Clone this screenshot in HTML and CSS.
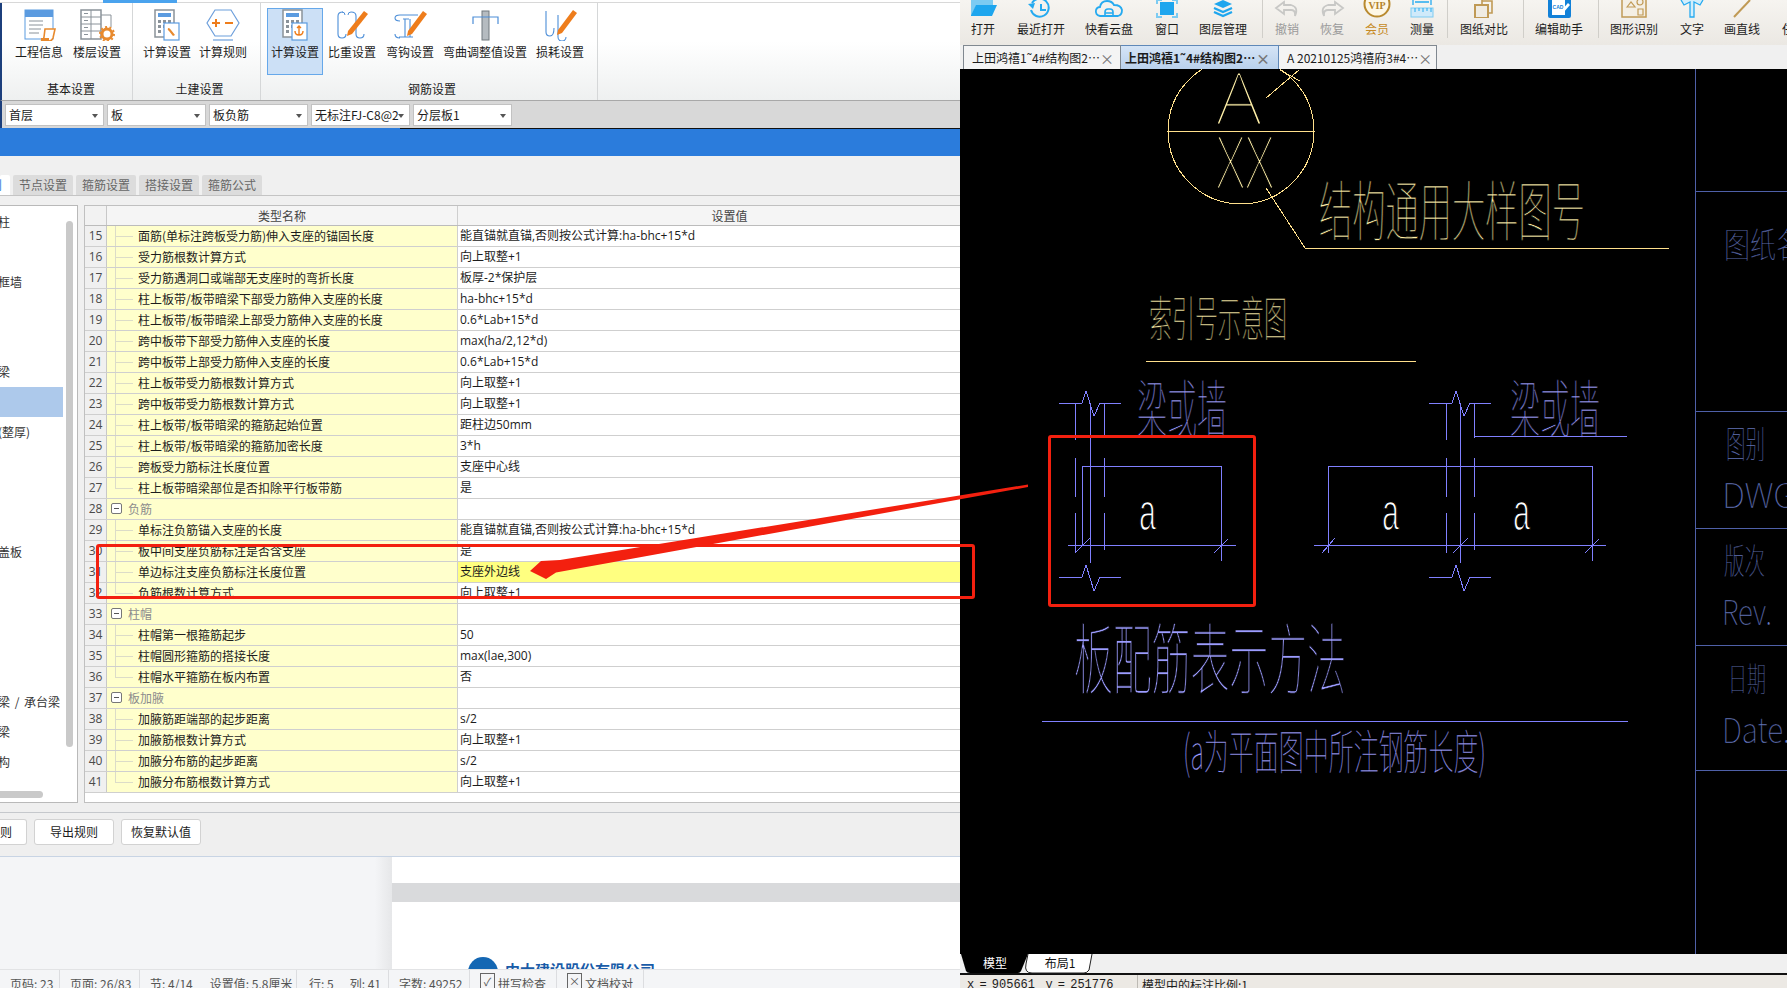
FILE: index.html
```html
<!DOCTYPE html>
<html lang="zh-CN">
<head>
<meta charset="utf-8">
<title>钢筋设置 / CAD 看图</title>
<link rel="stylesheet" href="styles.css">
</head>
<body>
<main class="left">
  <div class="strip"><span class="strip-tab"></span></div>
  <section class="ribbon">
    <div class="rgroup g1">
      <div class="rbtns">
        <div class="rbtn w58">
          <svg class="ricon" viewBox="0 0 36 32"><rect x="4" y="1" width="28" height="29" fill="#fff" stroke="#5b9be0"/><rect x="4" y="1" width="28" height="7" fill="#5b9be0"/><path d="M8 12h14M8 16h14M8 20h12M8 24h10" stroke="#8a9299"/><path d="M24 20h10l-2 9q-1 3-4 3h-8q3-1 3-4z" fill="#fff" stroke="#e88a2e" stroke-width="1.6"/><path d="M20 29h8v3h-8z" fill="#e88a2e"/></svg>
          <span>工程信息</span>
        </div>
        <div class="rbtn w58">
          <svg class="ricon" viewBox="0 0 36 32"><rect x="2" y="1" width="20" height="29" fill="#fff" stroke="#8a9299" stroke-width="1.5"/><path d="M2 8h20M2 15h20M2 22h20M12 1v29" stroke="#8a9299"/><path d="M5 4.500h4M5 11.500h4M5 18.500h4M5 25.500h4M22 6h10v12" stroke="#8a9299" fill="none"/><circle cx="28" cy="25" r="5" fill="#fff" stroke="#e88a2e" stroke-width="3"/><circle cx="28" cy="25" r="7" fill="none" stroke="#e88a2e" stroke-width="2" stroke-dasharray="2 2.400"/></svg>
          <span>楼层设置</span>
        </div>
      </div>
      <div class="rlabel">基本设置</div>
    </div>
    <div class="rgroup g2">
      <div class="rbtns">
        <div class="rbtn w56">
          <svg class="ricon" viewBox="0 0 36 32"><rect x="6" y="1" width="19" height="27" fill="#fff" stroke="#8a9299" stroke-width="1.5"/><rect x="9" y="4" width="13" height="4" fill="#5b9be0"/><path d="M9 11h3v3H9zM14 11h3v3h-3zM19 11h3v3h-3zM9 16h3v3H9zM9 21h3v3H9zM14 16h3v3h-3z" fill="#8a9299"/><rect x="15" y="14" width="15" height="17" fill="#fff" stroke="#5b9be0" stroke-width="1.2"/><path d="M19 19q2 0 3 2l4 5-2 1-4-5q-2-1-1-3z" fill="#e88a2e"/></svg>
          <span>计算设置</span>
        </div>
        <div class="rbtn w56">
          <svg class="ricon" viewBox="0 0 36 32"><path d="M10 1h16l8 13-8 13H10L2 14z" fill="#fff" stroke="#6d9fdc" stroke-width="1.2"/><path d="M7 14h8M11 10v8M20 14h8" stroke="#ee7d1c" stroke-width="2"/><path d="M8 31h20" stroke="#6d9fdc" stroke-width="1.2"/></svg>
          <span>计算规则</span>
        </div>
      </div>
      <div class="rlabel">土建设置</div>
    </div>
    <div class="rgroup g3">
      <div class="rbtns">
        <div class="rbtn w56 active">
          <svg class="ricon" viewBox="0 0 36 32"><rect x="6" y="1" width="19" height="27" fill="#fff" stroke="#8a9299" stroke-width="1.5"/><rect x="9" y="4" width="13" height="4" fill="#5b9be0"/><path d="M9 11h3v3H9zM14 11h3v3h-3zM19 11h3v3h-3zM9 16h3v3H9zM9 21h3v3H9zM14 16h3v3h-3z" fill="#8a9299"/><rect x="15" y="14" width="15" height="17" fill="#fff" stroke="#5b9be0" stroke-width="1.2"/><path d="M22 17v9M18 22q0 4 4 4t4-4M20 19l2-2 2 2" fill="none" stroke="#ee7d1c" stroke-width="1.4"/></svg>
          <span>计算设置</span>
        </div>
        <div class="rbtn w58">
          <svg class="ricon" viewBox="0 0 36 32"><path d="M8 3q-5 0-5 4v18q0 4 4 4t4-4M16 3q5 0 5 4v18q0 4 4 4t4-4" transform="translate(1 0)" fill="none" stroke="#4c8ed8" stroke-width="1.1"/><path d="M8 3q3 0 3 3M17 3q-3 0-3 3" fill="none" stroke="#4c8ed8"/><path d="M30 2l4 3-16 20-5 2 1-5z" fill="#ee7d1c"/></svg>
          <span>比重设置</span>
        </div>
        <div class="rbtn w58">
          <svg class="ricon" viewBox="0 0 36 32"><path d="M26 6H8Q3 6 3 9t5 3M11 10h6M13 10v18M18 10v18M7 28h14M3 25q0 4 5 4" fill="none" stroke="#4c8ed8" stroke-width="1.1"/><path d="M31 2l4 3-15 20-5 2 1-5z" fill="#ee7d1c"/></svg>
          <span>弯钩设置</span>
        </div>
        <div class="rbtn w92">
          <svg class="ricon" viewBox="0 0 36 32"><rect x="15" y="2" width="7" height="29" fill="#b5bbc0" stroke="#70787e"/><path d="M6 15v-7h25v7" fill="none" stroke="#4c8ed8" stroke-width="1.2"/></svg>
          <span>弯曲调整值设置</span>
        </div>
        <div class="rbtn w58">
          <svg class="ricon" viewBox="0 0 36 32"><path d="M4 2v21q0 4 4 4t4-8M16 6v22q0 4 4 4t4-4" fill="none" stroke="#4c8ed8" stroke-width="1.1"/><path d="M31 1l4 3-15 20-5 2 1-5z" fill="#ee7d1c"/></svg>
          <span>损耗设置</span>
        </div>
      </div>
      <div class="rlabel">钢筋设置</div>
    </div>
  </section>
  <section class="selects">
    <div class="sel">首层</div>
    <div class="sel">板</div>
    <div class="sel">板负筋</div>
    <div class="sel">无标注FJ-C8@2</div>
    <div class="sel">分层板1</div>
  </section>
  <div class="bluebar"></div>
  <nav class="tabs">
    <div class="tab tab-on"><span>则</span></div>
    <div class="tab">节点设置</div>
    <div class="tab">箍筋设置</div>
    <div class="tab">搭接设置</div>
    <div class="tab">箍筋公式</div>
  </nav>
  <section class="panels">
    <aside class="tree">
      <div class="titem">柱</div>
      <div class="titem"></div>
      <div class="titem">框墙</div>
      <div class="titem"></div>
      <div class="titem"></div>
      <div class="titem">梁</div>
      <div class="titem sel-item"></div>
      <div class="titem">(整厚)</div>
      <div class="titem"></div>
      <div class="titem"></div>
      <div class="titem"></div>
      <div class="titem">盖板</div>
      <div class="titem"></div>
      <div class="titem"></div>
      <div class="titem"></div>
      <div class="titem"></div>
      <div class="titem wide">梁 / 承台梁</div>
      <div class="titem">梁</div>
      <div class="titem">构</div>
      <i class="vthumb"></i>
      <i class="hthumb"></i>
    </aside>
    <div class="grid">
      <div class="row head"><div class="no"></div><div class="name">类型名称</div><div class="val">设置值</div></div>
      <div class="row"><div class="no">15</div><div class="name">面筋(单标注跨板受力筋)伸入支座的锚固长度</div><div class="val">能直锚就直锚,否则按公式计算:ha-bhc+15*d</div></div>
      <div class="row"><div class="no">16</div><div class="name">受力筋根数计算方式</div><div class="val">向上取整+1</div></div>
      <div class="row"><div class="no">17</div><div class="name">受力筋遇洞口或端部无支座时的弯折长度</div><div class="val">板厚-2*保护层</div></div>
      <div class="row"><div class="no">18</div><div class="name">柱上板带/板带暗梁下部受力筋伸入支座的长度</div><div class="val">ha-bhc+15*d</div></div>
      <div class="row"><div class="no">19</div><div class="name">柱上板带/板带暗梁上部受力筋伸入支座的长度</div><div class="val">0.6*Lab+15*d</div></div>
      <div class="row"><div class="no">20</div><div class="name">跨中板带下部受力筋伸入支座的长度</div><div class="val">max(ha/2,12*d)</div></div>
      <div class="row"><div class="no">21</div><div class="name">跨中板带上部受力筋伸入支座的长度</div><div class="val">0.6*Lab+15*d</div></div>
      <div class="row"><div class="no">22</div><div class="name">柱上板带受力筋根数计算方式</div><div class="val">向上取整+1</div></div>
      <div class="row"><div class="no">23</div><div class="name">跨中板带受力筋根数计算方式</div><div class="val">向上取整+1</div></div>
      <div class="row"><div class="no">24</div><div class="name">柱上板带/板带暗梁的箍筋起始位置</div><div class="val">距柱边50mm</div></div>
      <div class="row"><div class="no">25</div><div class="name">柱上板带/板带暗梁的箍筋加密长度</div><div class="val">3*h</div></div>
      <div class="row"><div class="no">26</div><div class="name">跨板受力筋标注长度位置</div><div class="val">支座中心线</div></div>
      <div class="row"><div class="no">27</div><div class="name last">柱上板带暗梁部位是否扣除平行板带筋</div><div class="val">是</div></div>
      <div class="row"><div class="no">28</div><div class="name group"><b class="minus"></b>负筋</div><div class="val"></div></div>
      <div class="row"><div class="no">29</div><div class="name">单标注负筋锚入支座的长度</div><div class="val">能直锚就直锚,否则按公式计算:ha-bhc+15*d</div></div>
      <div class="row"><div class="no">30</div><div class="name">板中间支座负筋标注是否含支座</div><div class="val">是</div></div>
      <div class="row"><div class="no">31</div><div class="name">单边标注支座负筋标注长度位置</div><div class="val hot">支座外边线</div></div>
      <div class="row"><div class="no">32</div><div class="name last">负筋根数计算方式</div><div class="val">向上取整+1</div></div>
      <div class="row"><div class="no">33</div><div class="name group"><b class="minus"></b>柱帽</div><div class="val"></div></div>
      <div class="row"><div class="no">34</div><div class="name">柱帽第一根箍筋起步</div><div class="val">50</div></div>
      <div class="row"><div class="no">35</div><div class="name">柱帽圆形箍筋的搭接长度</div><div class="val">max(lae,300)</div></div>
      <div class="row"><div class="no">36</div><div class="name last">柱帽水平箍筋在板内布置</div><div class="val">否</div></div>
      <div class="row"><div class="no">37</div><div class="name group"><b class="minus"></b>板加腋</div><div class="val"></div></div>
      <div class="row"><div class="no">38</div><div class="name">加腋筋距端部的起步距离</div><div class="val">s/2</div></div>
      <div class="row"><div class="no">39</div><div class="name">加腋筋根数计算方式</div><div class="val">向上取整+1</div></div>
      <div class="row"><div class="no">40</div><div class="name">加腋分布筋的起步距离</div><div class="val">s/2</div></div>
      <div class="row"><div class="no">41</div><div class="name last">加腋分布筋根数计算方式</div><div class="val">向上取整+1</div></div>
    </div>
  </section>
  <section class="actions">
    <div class="btn btn-cut">则</div>
    <div class="btn">导出规则</div>
    <div class="btn">恢复默认值</div>
  </section>
  <section class="doc">
    <div class="doc-side"></div>
    <div class="doc-page">
      <div class="sheet sheet-a"></div>
      <div class="sheet-gap"></div>
      <div class="sheet sheet-b">
        <span class="logo-mark"></span>
        <span class="logo-text">中大建设股份有限公司</span>
      </div>
    </div>
  </section>
  <footer class="wstatus">
    <div class="cell c60">页码: 23</div>
    <div class="cell c80">页面: 26/83</div>
    <div class="cell c157"><span>节: 4/14</span><span>设置值: 5.8厘米</span></div>
    <div class="cell c92"><span>行: 5</span><span>列: 41</span></div>
    <div class="cell c81">字数: 49252</div>
    <div class="cell c87"><b class="chk">✓</b>拼写检查</div>
    <div class="cell c87"><b class="chk">×</b>文档校对</div>
  </footer>
</main>

<aside class="right">
  <header class="cadbar">
    <div class="ci"><svg class="cicon" viewBox="0 0 30 18"><path d="M3 0h22v4H3z" fill="#7ccbf2"/><path d="M3 0h9l2 3h11v3H8L3 15z" fill="#7ccbf2"/><path d="M3 15L8 5h21l-5 11H3z" fill="#1ea6ee"/></svg><span>打开</span></div>
    <div class="ci"><svg class="cicon" viewBox="0 0 30 18"><path d="M6 3a9 9 0 1 1-1 7" fill="none" stroke="#25aaf0" stroke-width="2"/><path d="M2 4l7-1-2 6z" fill="#25aaf0"/><path d="M15 4v6h5" fill="none" stroke="#25aaf0" stroke-width="2"/></svg><span>最近打开</span></div>
    <div class="ci"><svg class="cicon" viewBox="0 0 30 18"><path d="M6 16q-5-1-4-6 1-3 4-3 1-6 7-6 5 0 7 4 7 0 8 5 0 5-4 6z" fill="none" stroke="#25aaf0" stroke-width="1.800"/><path d="M11 16v-4q0-3 3-3h2q3 0 3 3v4zM11 13h8" fill="none" stroke="#25aaf0" stroke-width="1.600"/></svg><span>快看云盘</span></div>
    <div class="ci"><svg class="cicon" viewBox="0 0 30 18"><rect x="8" y="2" width="14" height="13" fill="#1ea6ee"/><path d="M5 4V0h5M20 0h5v4M5 13v4h5M25 13v4h-5" fill="none" stroke="#7ccbf2" stroke-width="2"/></svg><span>窗口</span></div>
    <div class="ci"><svg class="cicon" viewBox="0 0 30 18"><path d="M15 0l9 4-9 4-9-4z" fill="#1ea6ee"/><path d="M6 8l9 4 9-4M6 12l9 4 9-4" fill="none" stroke="#1ea6ee" stroke-width="2.200"/></svg><span>图层管理</span></div>
    <i class="csep"></i>
    <div class="ci off"><svg class="cicon" viewBox="0 0 30 18"><path d="M12 2L4 8l8 6V10h7q4 0 4 4v2q4-9-4-11h-7z" fill="none" stroke="#c8c8c6" stroke-width="1.800"/></svg><span>撤销</span></div>
    <div class="ci off"><svg class="cicon" viewBox="0 0 30 18"><path d="M18 2l8 6-8 6V10h-7q-4 0-4 4v2Q3 7 11 5h7z" fill="none" stroke="#c8c8c6" stroke-width="1.800"/></svg><span>恢复</span></div>
    <div class="ci vip"><svg class="cicon" viewBox="0 0 30 18"><circle cx="15" cy="4" r="12.500" fill="#fdf7e6" stroke="#b98a2f" stroke-width="2"/><text x="15" y="9" class="viptxt">VIP</text></svg><span>会员</span></div>
    <div class="ci"><svg class="cicon" viewBox="0 0 30 18"><path d="M6 0v5M24 0v5M8 2h14" stroke="#25aaf0" stroke-width="1.300" fill="none"/><rect x="4" y="8" width="22" height="9" fill="#cfeafa" stroke="#7ccbf2"/><path d="M8 8v4M12 8v3M16 8v4M20 8v3M24 8v4" stroke="#25aaf0"/></svg><span>测量</span></div>
    <i class="csep"></i>
    <div class="ci"><svg class="cicon" viewBox="0 0 30 18"><path d="M13 0v5M13 1h10v12h-5" fill="none" stroke="#c09a55" stroke-width="1.600"/><rect x="6" y="5" width="13" height="13" fill="#f0ece3" stroke="#c09a55" stroke-width="2"/></svg><span>图纸对比</span></div>
    <i class="csep"></i>
    <div class="ci"><svg class="cicon" viewBox="0 0 30 18"><rect x="4" y="-2" width="23" height="20" rx="2" fill="#1281d8"/><rect x="8" y="0" width="13" height="15" fill="#fff"/><text x="14" y="9" class="cadtxt">CAD</text><path d="M24 3l2 2-7 8-3 1 1-3z" fill="#fff"/></svg><span>编辑助手</span></div>
    <i class="csep"></i>
    <div class="ci"><svg class="cicon" viewBox="0 0 30 18"><rect x="3" y="-3" width="24" height="20" fill="#f4efe4" stroke="#c09a55" stroke-width="1.500"/><path d="M9 5l4-5 4 5z M20 7h5v6h-5z" transform="translate(-1 2)" fill="none" stroke="#c09a55" stroke-width="1.200"/><circle cx="21" cy="2" r="3" fill="none" stroke="#c09a55" stroke-width="1.200"/></svg><span>图形识别</span></div>
    <div class="ci"><svg class="cicon" viewBox="0 0 30 18"><path d="M4 0l3 5 6-3v15h4V2l6 3 3-5" fill="#d3eefb" stroke="#25aaf0" stroke-width="1.300"/></svg><span>文字</span></div>
    <div class="ci"><svg class="cicon" viewBox="0 0 30 18"><path d="M7 17L23 0" stroke="#c09a55" stroke-width="2"/></svg><span>画直线</span></div>
    <div class="ci"><span class="cicon"></span><span>任务</span></div>
  </header>
  <nav class="ctabs">
    <div class="ctab"><span>上田鸿禧1˜4#结构图2…</span><em>×</em></div>
    <div class="ctab ctab-on"><span>上田鸿禧1˜4#结构图2…</span><em>×</em></div>
    <div class="ctab"><span>A 20210125鸿禧府3#4…</span><em>×</em></div>
  </nav>
  <svg class="cad" viewBox="960 69 827 885" width="827" height="885">
    <g class="t-y">
      <text class="latin" x="1216" y="124" font-size="70" textLength="46" lengthAdjust="spacingAndGlyphs">A</text>
      <text class="latin" x="1216" y="188" font-size="70" textLength="58" lengthAdjust="spacingAndGlyphs">XX</text>
      <text class="big" x="1319" y="235" font-size="65" textLength="266" lengthAdjust="spacingAndGlyphs">结构通用大样图号</text>
      <text class="mid" x="1149" y="336" font-size="48" textLength="138" lengthAdjust="spacingAndGlyphs">索引号示意图</text>
    </g>
    <g class="l-y">
      <circle cx="1241" cy="131" r="73"/>
      <path d="M1167 131H1315M1266 98L1299 70M1280 70L1300 81M1266 188L1305 248H1669M1146 361H1416"/>
    </g>
    <g class="t-b">
      <text class="big" x="1137" y="432" font-size="63" textLength="90" lengthAdjust="spacingAndGlyphs">梁或墙</text>
      <text class="big" x="1510" y="432" font-size="63" textLength="90" lengthAdjust="spacingAndGlyphs">梁或墙</text>
      <text class="big" x="1074" y="688" font-size="77" textLength="272" lengthAdjust="spacingAndGlyphs">板配筋表示方法</text>
      <text class="small" x="1183" y="769" font-size="47" textLength="303" lengthAdjust="spacingAndGlyphs">(a为平面图中所注钢筋长度)</text>
    </g>
    <g class="l-b">
      <path d="M1059 403H1082L1086 391L1094 416L1100 403H1121M1059 577H1082L1086 565L1094 591L1100 577H1121"/>
      <path d="M1075 403V440M1075 458V497M1075 513V553M1090 403V563M1104 403V438M1104 458V497M1104 513V550"/>
      <path d="M1082 545V466H1221V561M1068 545H1236M1075 553L1090 538M1214 553L1228 539"/>
      <path d="M1429 403H1452L1456 391L1464 416L1470 403H1491M1429 577H1452L1456 565L1464 591L1470 577H1491"/>
      <path d="M1446 403V440M1446 458V497M1446 513V553M1460 403V563M1474 403V438M1474 458V497M1474 513V550M1474 436H1627"/>
      <path d="M1328 553V466H1592V561M1314 545H1606M1322 553L1335 538M1453 553L1468 538M1585 553L1599 539"/>
      <path d="M1042 721H1628"/>
    </g>
    <g class="t-w">
      <text x="1139" y="530" font-size="54" textLength="17" lengthAdjust="spacingAndGlyphs">a</text>
      <text x="1382" y="530" font-size="54" textLength="17" lengthAdjust="spacingAndGlyphs">a</text>
      <text x="1513" y="530" font-size="54" textLength="17" lengthAdjust="spacingAndGlyphs">a</text>
    </g>
    <g class="t-d">
      <text x="1724" y="258" font-size="35" textLength="78" lengthAdjust="spacingAndGlyphs">图纸名</text>
      <text x="1726" y="458" font-size="37" textLength="39" lengthAdjust="spacingAndGlyphs">图别</text>
      <text x="1722" y="508" font-size="35" textLength="82" lengthAdjust="spacingAndGlyphs">DWG.</text>
      <text x="1724" y="574" font-size="35" textLength="41" lengthAdjust="spacingAndGlyphs">版次</text>
      <text x="1722" y="625" font-size="35" textLength="50" lengthAdjust="spacingAndGlyphs">Rev.</text>
      <text x="1728" y="691" font-size="33" textLength="38" lengthAdjust="spacingAndGlyphs">日期</text>
      <text x="1722" y="743" font-size="35" textLength="68" lengthAdjust="spacingAndGlyphs">Date.</text>
    </g>
    <path class="l-d" d="M1695 69V954M1695 191H1787M1695 411H1787M1695 528H1787M1695 645H1787M1695 770H1787"/>
  </svg>
  <div class="layouts">
    <svg class="layout-tabs" viewBox="0 0 140 20" width="140" height="20">
      <path class="lt-black" d="M1 0H68L61 17Q60 19 58 19H10Q7 19 6 17z"/>
      <text class="lt-w" x="35" y="14">模型</text>
      <path class="lt-white" d="M68 0L66 10Q64 19 72 19H124Q127 19 129 16L132 0"/>
      <text class="lt-k" x="100" y="14">布局1</text>
    </svg>
  </div>
  <footer class="cstatus">
    <div class="coords">x = 905661  y = 251776</div>
    <div class="scale">模型中的标注比例:1</div>
  </footer>
</aside>

<svg class="marks" viewBox="0 0 1787 988" width="1787" height="988">
  <rect class="mark" x="97.500" y="545.500" width="876" height="52" rx="1.500"/>
  <rect class="mark" x="1049.500" y="436.500" width="205" height="169" rx="1.500"/>
  <polygon class="mark-fill" points="1028,484.500 560,560 541,561 530,571 546,579 556,572.500 1028,487"/>
</svg>
</body>
</html>
```
FILE: styles.css
```css
* { box-sizing: border-box; }
html, body { margin: 0; padding: 0; }
body {
  width: 1787px;
  height: 988px;
  overflow: hidden;
  display: flex;
  position: relative;
  background: #f0f0f0;
  color: #1c1c1c;
  font: 12px/14px "Noto Sans CJK SC", "Open Sans", sans-serif;
}

/* left application */
.left { width: 960px; height: 988px; flex: none; display: flex; flex-direction: column; overflow: hidden; }
.strip { height: 3px; flex: none; background: #fff; border-bottom: 1px solid #d8d8d8; }
.strip-tab { display: block; width: 74px; height: 3px; margin-left: 103px; background: #4aa3ee; }
.ribbon { height: 97px; flex: none; display: flex; background: linear-gradient(#fff 40%, #eef0f0); border-left: 2px solid #1c3f7c; }
.rgroup { height: 97px; padding-top: 5px; border-right: 1px solid #d5d7d8; flex: none; }
.g1 { width: 131px; padding-left: 8px; }
.g2 { width: 128px; padding-left: 6px; }
.g3 { width: 337px; padding-left: 6px; }
.rbtns { display: flex; height: 67px; }
.rbtn { height: 67px; padding-top: 1px; display: flex; flex-direction: column; align-items: center; flex: none; white-space: nowrap; }
.rbtn span { margin-top: 4px; }
.ricon { width: 36px; height: 32px; flex: none; }
.w56 { width: 56px; }
.w58 { width: 58px; }
.w92 { width: 92px; }
.active { background: #cce0f6; border: 1px solid #66a8ea; padding-top: 0; }
.rlabel { margin-top: 7px; text-align: center; }

.selects { height: 28px; flex: none; display: flex; gap: 3px; padding: 3px 0 3px 3px; background: #d8d8d8; border-left: 2px solid #1c3f7c; border-top: 1px solid #a8a8a8; }
.sel { width: 99px; height: 22px; flex: none; background: #fff; border: 1px solid #c2c2c2; padding: 3px 13px 0 3px; white-space: nowrap; overflow: hidden; position: relative; }
.sel::after { content: ""; position: absolute; right: 5px; top: 9px; border: 3px solid transparent; border-top: 4px solid #555; border-bottom: 0; }
.bluebar { height: 28px; flex: none; background: linear-gradient(#111, #111) 400px 0 / 100% 1px no-repeat, #2b7cdc; }

.tabs { height: 40px; flex: none; padding-top: 19px; display: flex; gap: 3px; border-bottom: 1px solid #c4c4c4; background: #f0f0f0; }
.tab { width: 60px; height: 20px; background: #dcdcdc; color: #666; text-align: center; line-height: 20px; border-radius: 2px 2px 0 0; white-space: nowrap; }
.tab-on { width: 10px; background: #fff; color: #2b7cdc; overflow: hidden; text-align: left; }
.tab-on span { margin-left: -10px; }

.panels { height: 598px; flex: none; margin-top: 9px; display: flex; gap: 6px; }
.tree { width: 78px; height: 598px; flex: none; position: relative; background: #fff; border: solid #b9b9b9; border-width: 1px 1px 1px 0; padding-top: 1px; overflow: hidden; }
.titem { height: 30px; line-height: 30px; color: #333; white-space: nowrap; margin-left: -2px; }
.sel-item { width: 65px; background: #adc9eb; }
.wide { word-spacing: 2px; }
.vthumb { position: absolute; left: 66px; top: 15px; width: 7px; height: 526px; background: #c9c9c9; border-radius: 4px; }
.hthumb { position: absolute; left: -10px; top: 585px; width: 53px; height: 7px; background: #c9c9c9; border-radius: 4px; }

.grid { width: 876px; height: 598px; flex: none; background: #fff; border: solid #c0c0c0; border-width: 1px 0 1px 1px; overflow: hidden; }
.row { display: grid; grid-template-columns: 22px 351px 1fr; height: 21px; border-bottom: 1px solid #cfcfcf; line-height: 20px; }
.head { height: 20px; border-bottom-color: #bcbcbc; line-height: 19px; }
.no { background: #f0f0f0; border-right: 1px solid #c8c8c8; text-align: center; color: #4a4a4a; font-family: "Open Sans", sans-serif; }
.name {
  padding-left: 31px;
  white-space: nowrap;
  border-right: 1px solid #cfcfcf;
  background:
    linear-gradient(#dcdcc8, #dcdcc8) 9px 10px / 17px 1px no-repeat,
    linear-gradient(#dcdcc8, #dcdcc8) 8px 0 / 1px 100% no-repeat,
    #ffffcc;
}
.val { padding-left: 2px; white-space: nowrap; font-family: "Open Sans", "Noto Sans CJK SC", sans-serif; }
.head .no { background: #f2f2f2; }
.head .name { background: #f5f5f5; color: #444; padding-left: 0; text-align: center; }
.head .val { background: #f5f5f5; color: #444; padding-left: 41px; text-align: center; font-family: "Noto Sans CJK SC", sans-serif; }
.last {
  background:
    linear-gradient(#dcdcc8, #dcdcc8) 9px 10px / 17px 1px no-repeat,
    linear-gradient(#dcdcc8, #dcdcc8) 8px 0 / 1px 11px no-repeat,
    #ffffcc;
}
.group { padding-left: 21px; color: #8c8c8c; position: relative; background: #ffffcc; }
.minus { position: absolute; left: 4px; top: 4px; width: 11px; height: 11px; border: 1px solid #777; border-radius: 2px; background: linear-gradient(#555, #555) center / 5px 1px no-repeat, #fff; }
.hot { background: #ffff80; }

.actions { height: 53px; flex: none; display: flex; gap: 7px; align-items: flex-start; padding-top: 16px; background: linear-gradient(#c5c8cc, #c5c8cc) 0 9px / 100% 1px no-repeat, #efefef; }
.btn { width: 80px; height: 26px; background: #fff; border: 1px solid #d2d2d2; border-radius: 3px; text-align: center; line-height: 24px; }
.btn-cut { width: 27px; border-left: 0; border-radius: 0 3px 3px 0; text-align: left; }

.doc { height: 113px; flex: none; display: flex; border-top: 1px solid #c8d4e4; background: #f4f5f7; }
.doc-side { width: 392px; flex: none; background: linear-gradient(90deg, #f4f5f7 375px, #e6e7e9 392px); }
.doc-page { flex: 1; overflow: hidden; background: #fff; }
.sheet-a { height: 26px; background: #fff; }
.sheet-gap { height: 19px; background: #d9dadc; }
.sheet-b { height: 68px; padding: 55px 0 0 76px; background: #fff; display: flex; gap: 7px; overflow: hidden; }
.logo-mark { width: 30px; height: 30px; border-radius: 50%; background: #1467b3; flex: none; }
.logo-text { font-size: 15px; line-height: 26px; font-weight: 700; color: #1a5ca8; white-space: nowrap; }

.wstatus { height: 19px; flex: none; display: flex; background: #f4f5f7; border-top: 1px solid #e2e3e5; color: #555; overflow: hidden; position: relative; }
.cell { height: 30px; padding: 7px 0 0 10px; border-right: 1px solid #dcdde0; display: flex; gap: 17px; white-space: nowrap; flex: none; }
.c60 { width: 60px; }
.c80 { width: 80px; }
.c157 { width: 157px; gap: 17px; }
.c92 { width: 92px; gap: 16px; padding-left: 12px; }
.c81 { width: 81px; }
.c87 { width: 87px; gap: 3px; }
.chk { width: 15px; height: 17px; margin-top: -4px; border: 1px solid #666; font-weight: 400; line-height: 14px; text-align: center; flex: none; font-size: 11px; }

/* right application */
.right { width: 827px; height: 988px; flex: none; display: flex; flex-direction: column; overflow: hidden; background: #f0f0f0; }
.cadbar {
  height: 45px; flex: none; margin-left: -6px;
  display: grid;
  grid-template-columns: 58px 58px 78px 38px 74px 4px 46px 44px 46px 44px 6px 68px 10px 62px 16px 56px 60px 40px 64px;
  background: linear-gradient(#f6f4f0, #ebe8e3);
  overflow: hidden;
}
.ci { display: flex; flex-direction: column; align-items: center; white-space: nowrap; overflow: visible; }
.ci > span:last-child { margin-top: 4px; line-height: 14px; }
.cicon { display: block; width: 30px; height: 18px; flex: none; overflow: hidden; }
.off { color: #9a9a9a; }
.vip { color: #c68a25; }
.viptxt { font: 700 10px "Liberation Serif", serif; fill: #b5832a; text-anchor: middle; }
.cadtxt { font: 700 5px "Liberation Sans", sans-serif; fill: #1281d8; text-anchor: middle; }
.csep { width: 1px; height: 38px; background: #d0cec9; justify-self: center; }

.ctabs { height: 24px; flex: none; display: flex; padding-left: 3px; background: #f0f0f0; }
.ctab { width: 158px; height: 24px; border: 1px solid #808890; border-bottom: 0; padding-left: 8px; display: flex; align-items: center; justify-content: space-between; padding-right: 8px; background: #f4f4f4; white-space: nowrap; }
.ctab + .ctab { border-left: 0; }
.ctab em { font-style: normal; font-size: 14px; color: #777; }
.ctab-on { background: linear-gradient(#d5e4f6, #b9d1ec); border: 1px solid #5f88b8; border-bottom: 0; font-weight: 700; padding-left: 4px; }

.cad { display: block; flex: none; background: #000; }
.cad text { font-family: "Noto Sans CJK SC", "Liberation Sans", sans-serif; font-weight: 100; stroke: #000; stroke-width: 0.5px; }
.cad .big { stroke-width: 0.7px; }
.cad .mid { stroke-width: 0.5px; }
.cad .small { stroke-width: 0.3px; }
.cad .latin { stroke-width: 1.2px; }
.t-y text { fill: #fff0a8; }
.t-b text { fill: #9c9cff; }
.t-w text { fill: #fff; font-family: "Liberation Sans", sans-serif; stroke-width: 1.6px; }
.cad .t-d text { fill: #6a7cc8; stroke-width: 0.3px; }
.l-y { fill: none; stroke: #ffe08c; stroke-width: 1; shape-rendering: crispEdges; }
.l-b { fill: none; stroke: #8080ff; stroke-width: 1; shape-rendering: crispEdges; }
.l-d { fill: none; stroke: #4f60a8; stroke-width: 1; shape-rendering: crispEdges; }

.layouts { height: 21px; flex: none; background: #f0f0f0; border-bottom: 2px solid #111; }
.layout-tabs { display: block; }
.lt-black { fill: #000; }
.lt-white { fill: #fff; stroke: #222; }
.lt-w { fill: #fff; font-size: 12px; text-anchor: middle; }
.lt-k { fill: #111; font-size: 12px; text-anchor: middle; }
.cstatus { flex: 1; display: flex; background: #ece9e4; overflow: hidden; }
.coords { width: 178px; padding: 3px 0 0 7px; flex: none; font-family: "Liberation Mono", monospace; font-size: 12px; white-space: pre; border-right: 1px solid #bdbab4; word-spacing: -2px; }
.scale { padding: 3px 0 0 4px; }

/* hand-drawn review marks over the screenshot */
.marks { position: absolute; left: 0; top: 0; pointer-events: none; }
.mark { fill: none; stroke: #f3200f; stroke-width: 3; }
.mark-fill { fill: #f3200f; }
```
